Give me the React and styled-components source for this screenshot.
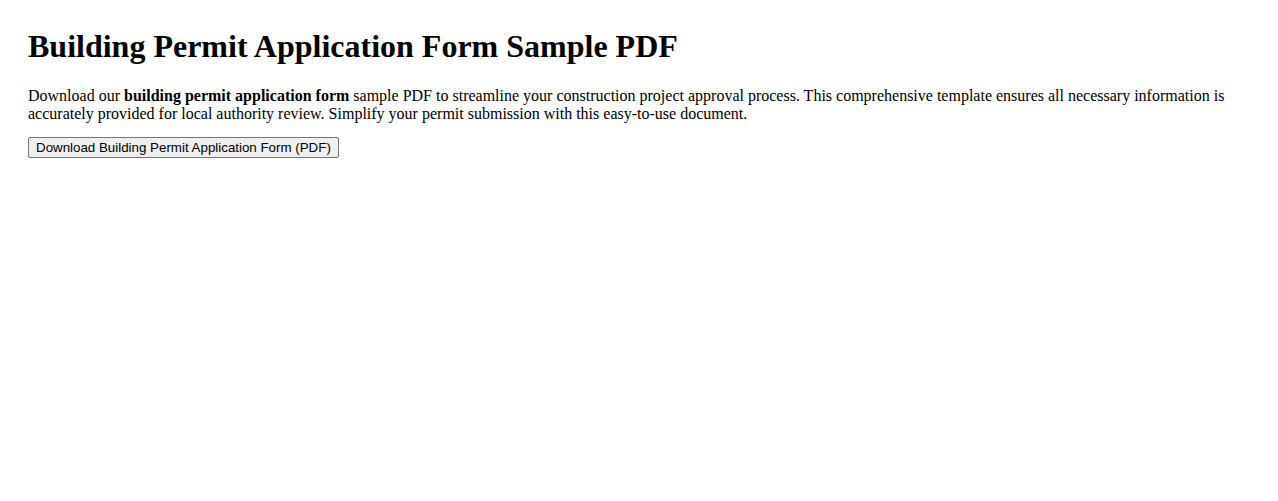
import React from "react";
import styled, { createGlobalStyle } from "styled-components";

const GlobalStyle = createGlobalStyle`
  body {
    margin: 0;
    background: #fff;
    color: #000;
    font-family: "Liberation Serif", "Times New Roman", serif;
  }
`;

const Page = styled.main`
  padding: 28px;
`;

const Title = styled.h1`
  margin: 0 0 22px;
  font-size: 32px;
  font-weight: bold;
`;

const Intro = styled.p`
  margin: 16px 0 14px;
  font-size: 16px;
  line-height: normal;
`;

const DownloadButton = styled.button`
  font-family: "Liberation Sans", Arial, sans-serif;
  font-size: 13.333px;
  color: #000;
  background: #efefef;
  border: 1px solid #767676;
  border-radius: 2px;
  padding: 2px 7px;
  cursor: pointer;

  &:hover {
    background: #e5e5e5;
  }
`;

export default function App() {
  return (
    <>
      <GlobalStyle />
      <Page>
        <Title>Building Permit Application Form Sample PDF</Title>
        <Intro>
          Download our <strong>building permit application form</strong> sample PDF to
          streamline your construction project approval process. This comprehensive
          template ensures all necessary information is accurately provided for local
          authority review. Simplify your permit submission with this easy-to-use
          document.
        </Intro>
        <DownloadButton>Download Building Permit Application Form (PDF)</DownloadButton>
      </Page>
    </>
  );
}
